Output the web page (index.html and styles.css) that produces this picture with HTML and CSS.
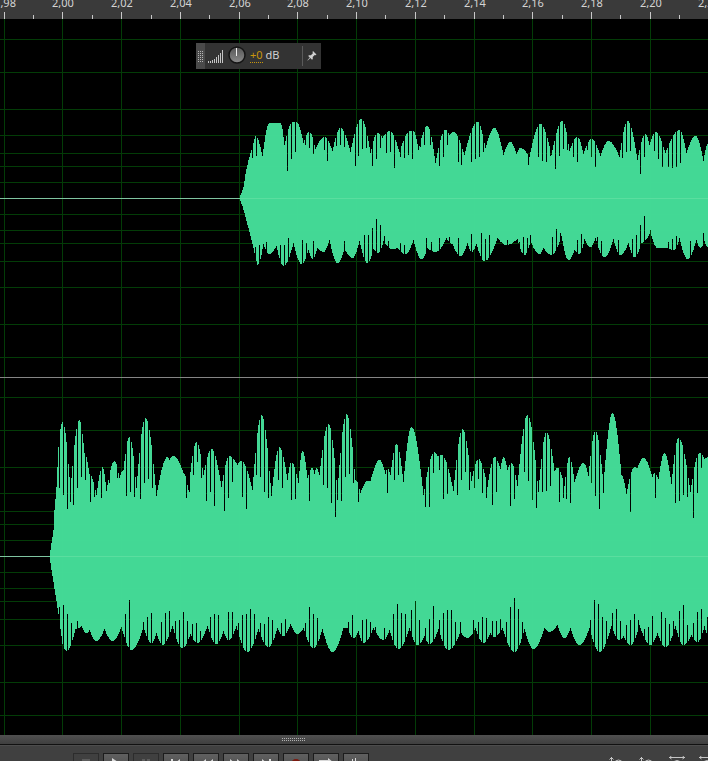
FILE: index.html
```html
<!DOCTYPE html>
<html lang="en">
<head>
    <meta charset="UTF-8">
    <title>Waveform editor</title>
    <link rel="stylesheet" href="styles.css">
</head>
<body>
    <div class="editor">
        <svg class="ruler" id="ruler"></svg>
        <div class="tracks">
            <svg class="waves" id="waves"></svg>
            <div class="hud">
                <span class="hud-grip">
                    <svg width="9" height="26"><path d="M2.5 8v12M4.5 8v12M6.5 8v12" stroke="#b5b5b5" stroke-dasharray="1 1"/></svg>
                </span>
                <svg class="hud-level" width="16" height="16"><path d="M.5 13v2M2.5 13v2M4.5 12v3M6.5 11v4M8.5 9v6M10.5 7v8M12.5 5v10M14.5 2v13" stroke="#c4c4c4"/></svg>
                <svg class="hud-knob" width="18" height="18">
                    <defs>
                        <linearGradient id="knob" x1="0" y1="0" x2="0" y2="1">
                            <stop offset="0" stop-color="#555"/>
                            <stop offset="1" stop-color="#8c8c8c"/>
                        </linearGradient>
                    </defs>
                    <circle cx="9" cy="9" r="8" fill="url(#knob)" stroke="#151515" stroke-width="1.5"/>
                    <path d="M8.5 2v8" stroke="#f0f0f0"/>
                </svg>
                <span class="hud-gain"><a href="#" class="hud-value">+0</a> dB</span>
                <button class="hud-pin" aria-label="Pin">
                    <svg width="10" height="12"><path d="M6 1l3.500 3.500-1 .8-.8-.2-2 2 .1 2-.8.7-1.700-1.700L.8 10.600l-.4-.4 2.400-2.600L1.200 6l.7-.8 2 .1 2-2-.4-1.200z" fill="#d0d0d0"/></svg>
                </button>
            </div>
        </div>
        <div class="splitter">
            <svg width="24" height="6"><path d="M0 1.500h24M0 3.500h24" stroke="#b0b0b0" stroke-dasharray="1 1"/></svg>
        </div>
        <div class="toolbar">
            <div class="transport">
                <button class="btn" disabled aria-label="Stop"><svg width="18" height="12"><path d="M5 1h8v9H5z"/></svg></button>
                <button class="btn" aria-label="Play"><svg width="18" height="12"><path d="M5 0l9 6-9 6z"/></svg></button>
                <button class="btn" disabled aria-label="Pause"><svg width="18" height="12"><path d="M5 1h3v10H5zM10 1h3v10h-3z"/></svg></button>
                <button class="btn" aria-label="To start"><svg width="18" height="12"><path d="M4 1h2v10H4zM13 1v10L7 6z"/></svg></button>
                <button class="btn" aria-label="Rewind"><svg width="18" height="12"><path d="M9 1v10L3 6zM16 1v10l-6-5z"/></svg></button>
                <button class="btn" aria-label="Fast forward"><svg width="18" height="12"><path d="M3 1v10l6-5zM10 1v10l6-5z"/></svg></button>
                <button class="btn" aria-label="To end"><svg width="18" height="12"><path d="M5 1v10l6-5zM12 1h2v10h-2z"/></svg></button>
                <button class="btn btn-record" aria-label="Record"><svg width="18" height="12"><circle cx="9" cy="6" r="5"/></svg></button>
                <button class="btn" aria-label="Loop"><svg width="18" height="12"><path d="M2 2h9V0l5 4-5 4V6H4v3h10v2H2z"/></svg></button>
                <button class="btn" aria-label="Skip selection"><svg width="18" height="12"><path d="M5 1h1v10H5zM8 0h1v12H8zM11 3l4 4-4 4z"/></svg></button>
            </div>
            <div class="zoom">
                <button class="zoom-btn" aria-label="Zoom in amplitude"><svg width="20" height="18"><path d="M4.500 1v14M2.500 3.500l2-2 2 2M14.500 12.500l4 4"/><circle cx="11.500" cy="8" r="4"/></svg></button>
                <button class="zoom-btn" aria-label="Zoom out amplitude"><svg width="20" height="18"><path d="M4.500 1v14M2.500 3.500l2-2 2 2M14.500 12.500l4 4"/><circle cx="11.500" cy="8" r="4"/></svg></button>
                <button class="zoom-btn" aria-label="Zoom in time"><svg width="20" height="18"><path d="M2 1.500h16M4.500 0l-2 1.500 2 1.500M15.500 0l2 1.500-2 1.500M13.500 12.500l4 4"/><circle cx="10" cy="8.500" r="4"/></svg></button>
                <button class="zoom-btn" aria-label="Zoom out time"><svg width="20" height="18"><path d="M2 1.500h16M4.500 0l-2 1.500 2 1.500M15.500 0l2 1.500-2 1.500M13.500 12.500l4 4"/><circle cx="10" cy="8.500" r="4"/></svg></button>
            </div>
        </div>
    </div>
    <script src="script.js"></script>
</body>
</html>
```
FILE: styles.css
```css
body {
    margin: 0;
    height: 100vh;
    overflow: hidden;
    background-color: #3c3c3c;
    color: #d0d0d0;
    font-family: "Noto Sans", "Liberation Sans", sans-serif;
    font-size: 11px;
}
button {
    margin: 0;
    padding: 0;
    border: none;
    background: none;
    cursor: pointer;
}
.editor {
    display: flex;
    flex-direction: column;
    height: 100%;
}
.ruler {
    display: block;
    flex: none;
    width: 100%;
    height: 19px;
    background-color: #3a3a3a;
}
.ruler text {
    fill: #d4d4d4;
    font-size: 11px;
    text-anchor: middle;
}
.ruler path {
    stroke: #c8c8c8;
}
.tracks {
    position: relative;
    flex: 1;
    min-height: 0;
    overflow: hidden;
    background-color: #000000;
}
.waves {
    display: block;
    width: 100%;
    height: 100%;
}
.grid-line {
    stroke: #033c07;
}
.wave {
    fill: #44dc98;
    fill-opacity: 0.98;
}
.zero-line {
    stroke: #7fc4a0;
}
.zero-over {
    stroke: #5ade9f;
}
.separator {
    stroke: #858585;
}
.hud {
    position: absolute;
    top: 24px;
    left: 196px;
    display: flex;
    align-items: center;
    width: 125px;
    height: 26px;
    background-color: #333333;
}
.hud-grip {
    height: 26px;
    background-color: #4a4a4a;
}
.hud-level {
    margin-left: 3px;
}
.hud-knob {
    margin: 0 4px 2px 4px;
}
.hud-gain {
    padding-bottom: 2px;
    line-height: 14px;
    white-space: nowrap;
}
.hud-value {
    color: #c8960c;
    text-decoration: none;
    border-bottom: 1px dotted #c8960c;
}
.hud-pin {
    display: flex;
    align-items: center;
    height: 20px;
    margin-left: auto;
    padding: 0 4px;
    border-left: 1px solid #5a5a5a;
}
.splitter {
    display: flex;
    flex: none;
    justify-content: center;
    height: 9px;
    padding: 0 120px 0 0;
    background: linear-gradient(#505050, #3f3f3f);
    border-bottom: 1px solid #111111;
}
.splitter svg {
    margin-top: 2px;
}
.toolbar {
    display: flex;
    flex: none;
    height: 16px;
    box-sizing: border-box;
    padding: 7px 0 0 73px;
    overflow: hidden;
    background-color: #404040;
    border-top: 1px solid #4c4c4c;
}
.transport {
    display: flex;
    gap: 4px;
}
.btn {
    display: flex;
    align-items: center;
    justify-content: center;
    width: 26px;
    height: 22px;
    box-sizing: border-box;
    background: linear-gradient(#606060, #484848);
    border: 1px solid #1c1c1c;
    fill: #d8d8d8;
}
.btn:disabled {
    background: #404040;
    border-color: #2c2c2c;
    fill: #5c5c5c;
}
.btn-record {
    fill: #7c1a10;
}
.zoom {
    display: flex;
    gap: 4px;
    width: 104px;
    margin-left: auto;
    overflow: hidden;
}
.zoom-btn {
    flex: none;
    width: 26px;
    height: 26px;
    fill: none;
    stroke: #c4c4c4;
}
```
FILE: script.js
```javascript
const RULER_HEIGHT = 19;
const STEP = 58.73;      // px per 0.02 s
const START = 3.7;       // px of 1.98 s
const width = Math.max(window.innerWidth, 708);

const dbLines = [16, 32, 45, 63, 89, 126, 159];

// Envelopes are x,y pairs of peaks and valleys, cuts are x,y pairs of the thin gaps
const channels = [
    {
        zero: 198,
        top: [239,198, 243,187, 245,174, 248,160, 255,136, 262,156, 269,123, 280,123, 284,145, 292,122, 296,122, 303,143, 309,132, 315,149, 324,137, 332,151, 340,128, 350,152, 361,119, 370,153, 377,133, 382,138, 389,131, 399,152, 410,131, 413,131, 418,150, 427,126, 435,163, 445,130, 449,135, 453,132, 464,155, 477,122, 485,148, 494,128, 503,155, 510,142, 516,154, 520,148, 529,157, 540,124, 551,155, 562,121, 569,151, 577,137, 583,154, 591,139, 600,156, 608,141, 619,157, 627,121, 637,160, 645,134, 649,145, 655,132, 665,153, 679,130, 686,153, 695,136, 703,161, 708,143],
        topCuts: [252,158, 256,156, 287,171, 291,159, 295,152, 305,145, 309,148, 313,154, 324,150, 327,161, 336,146, 340,145, 344,147, 355,166, 358,156, 362,149, 366,148, 372,166, 376,159, 380,148, 386,153, 390,152, 394,168, 400,157, 404,158, 408,155, 412,159, 420,147, 424,145, 430,145, 439,166, 443,157, 447,145, 458,162, 461,165, 471,162, 475,159, 479,157, 483,152, 528,165, 538,157, 542,161, 546,162, 550,156, 555,169, 559,156, 563,149, 567,150, 573,157, 577,162, 587,150, 591,157, 595,167, 622,158, 626,152, 630,151, 640,174, 644,157, 654,151, 658,159, 662,167, 668,167, 672,168, 676,167, 680,163],
        bottom: [239,198, 242,205, 245,216, 250,235, 257,264, 263,243, 269,253, 276,245, 283,265, 293,242, 301,263, 308,249, 312,258, 317,247, 323,251, 329,239, 337,262, 344,248, 352,257, 359,240, 367,262, 373,248, 378,252, 383,240, 392,248, 397,247, 405,253, 413,239, 421,258, 427,247, 435,251, 446,237, 452,243, 460,255, 467,242, 471,251, 476,243, 484,260, 497,237, 506,244, 517,238, 524,254, 530,240, 539,253, 543,247, 551,254, 561,235, 568,259, 574,249, 579,253, 584,238, 590,246, 595,237, 604,256, 613,238, 620,254, 628,242, 634,256, 641,242, 650,231, 657,247, 667,247, 674,249, 679,237, 687,258, 696,239, 700,247, 704,240, 708,247],
        bottomCuts: [255,246, 259,244, 266,241, 280,244, 284,244, 288,237, 302,239, 306,242, 313,240, 344,240, 364,234, 368,234, 372,227, 376,218, 380,224, 384,235, 388,240, 400,242, 404,244, 426,237, 431,241, 439,237, 449,236, 458,237, 471,233, 481,232, 485,238, 489,234, 507,239, 519,241, 523,236, 527,237, 530,234, 552,236, 556,228, 560,232, 577,239, 581,233, 597,236, 601,240, 618,239, 632,238, 636,234, 640,224, 644,215, 650,229, 668,241, 672,238, 676,235, 690,240, 703,232]
    },
    {
        zero: 556,
        top: [49,556, 53,530, 54,510, 56,487, 58,447, 62,422, 70,490, 79,420, 84,453, 89,474, 96,495, 102,467, 106,491, 114,461, 119,478, 123,470, 129,437, 136,488, 145,418, 156,496, 167,457, 169,460, 173,456, 183,473, 188,490, 196,442, 203,475, 211,449, 221,487, 229,456, 237,465, 241,461, 252,490, 261,415, 271,496, 279,447, 287,480, 291,462, 298,483, 302,451, 307,478, 312,468, 314,474, 316,468, 319,475, 328,424, 337,492, 346,414, 355,480, 360,493, 367,481, 370,481, 379,460, 385,474, 387,468, 390,475, 396,444, 403,482, 411,427, 423,495, 434,452, 437,456, 441,455, 453,491, 462,429, 471,481, 478,459, 487,487, 494,457, 500,469, 503,457, 507,470, 511,463, 517,486, 527,415, 538,492, 546,432, 554,471, 557,468, 564,486, 569,457, 574,482, 583,463, 588,476, 595,431, 603,485, 612,413, 621,475, 626,494, 634,467, 637,468, 643,458, 652,477, 654,473, 658,479, 664,453, 671,484, 678,438, 690,492, 699,453, 704,459, 708,457],
        topCuts: [59,488, 63,495, 67,509, 70,502, 73,505, 77,488, 81,477, 85,480, 90,502, 94,497, 101,498, 109,483, 117,478, 126,496, 130,492, 134,497, 140,499, 144,483, 148,479, 152,488, 186,498, 189,492, 193,475, 197,462, 201,478, 206,501, 210,492, 214,506, 224,511, 228,498, 232,482, 242,497, 246,509, 256,475, 260,477, 264,492, 268,498, 278,480, 282,488, 291,500, 295,499, 309,501, 323,485, 327,488, 331,503, 335,517, 337,500, 341,501, 345,477, 349,474, 353,483, 358,502, 387,493, 394,480, 398,475, 425,507, 429,507, 433,473, 439,470, 443,499, 447,494, 457,495, 461,480, 465,472, 469,490, 474,488, 478,479, 482,493, 486,498, 492,505, 496,492, 510,506, 514,499, 524,472, 528,481, 532,500, 536,508, 542,492, 546,491, 550,486, 559,502, 563,498, 566,499, 570,503, 591,483, 595,496, 599,509, 603,493, 630,512, 655,498, 675,503, 679,501, 683,495, 687,497, 693,518, 697,493, 701,468],
        bottom: [49,556, 52,575, 56,600, 59,620, 62,643, 66,650, 75,628, 81,625, 86,632, 89,629, 96,640, 104,628, 112,640, 121,626, 131,649, 143,626, 151,642, 156,632, 162,644, 172,625, 182,647, 190,633, 197,642, 207,625, 216,643, 223,630, 228,639, 236,625, 247,651, 258,628, 268,646, 277,627, 283,635, 290,623, 297,633, 303,627, 313,647, 322,628, 332,651, 343,627, 347,627, 353,637, 358,630, 363,642, 373,627, 383,639, 389,629, 398,648, 409,627, 417,644, 424,635, 429,643, 438,628, 448,649, 460,631, 467,637, 475,627, 483,642, 490,632, 494,636, 502,627, 514,651, 524,628, 533,648, 544,627, 549,631, 557,624, 564,637, 570,627, 579,644, 589,627, 599,651, 611,625, 619,639, 623,635, 630,644, 639,624, 650,644, 657,632, 665,646, 675,625, 683,644, 691,634, 697,641, 704,625, 708,635],
        bottomCuts: [59,606, 63,604, 67,613, 71,622, 77,620, 125,613, 129,599, 143,621, 147,616, 151,612, 161,621, 165,612, 169,610, 175,620, 179,619, 183,611, 187,620, 192,623, 196,622, 200,630, 210,616, 214,613, 218,614, 228,611, 232,611, 238,622, 242,614, 246,613, 250,608, 254,613, 260,622, 264,623, 268,616, 272,619, 281,622, 285,618, 305,622, 309,606, 313,613, 317,617, 348,621, 352,614, 362,619, 366,618, 370,621, 375,626, 384,627, 393,613, 397,603, 401,612, 405,613, 411,609, 415,600, 419,619, 425,627, 429,618, 433,605, 439,619, 443,612, 447,609, 451,609, 455,621, 460,621, 473,619, 478,621, 482,616, 486,617, 492,620, 496,620, 500,618, 506,621, 510,606, 514,597, 518,608, 522,621, 590,619, 594,599, 598,603, 602,616, 606,620, 612,612, 616,608, 620,620, 626,624, 630,619, 634,613, 638,619, 644,628, 648,626, 652,615, 661,611, 665,617, 669,623, 673,620, 679,610, 683,604, 687,624, 693,622, 697,611, 701,608, 707,616]
    }
];

function line(cls, x1, y1, x2, y2) {
    return `<path class="${cls}" d="M${x1} ${y1}L${x2} ${y2}"/>`;
}

// One y value per pixel column: steep next to a valley, flat next to a peak
function columns(points, cuts, zero) {
    const ys = [];
    for (let i = 0; i + 3 < points.length; i += 2) {
        const [x1, y1, x2, y2] = points.slice(i, i + 4);
        const rising = Math.abs(y2 - zero) > Math.abs(y1 - zero);
        for (let x = x1; x < x2; x++) {
            const t = (x - x1) / (x2 - x1);
            let k = rising ? Math.sin(t * Math.PI / 2) : 1 - Math.cos(t * Math.PI / 2);
            // the attack is a straight ramp
            if (i < 8) {
                k = t;
            }
            ys[x] = Math.round(y1 + (y2 - y1) * k);
        }
    }
    for (let i = 0; i < cuts.length; i += 2) {
        ys[cuts[i]] = cuts[i + 1];
    }
    return ys;
}

function drawRuler() {
    let out = '';
    for (let n = 0; START + n * STEP < width + 30; n++) {
        const x = Math.round(START + n * STEP);
        const half = Math.round(START + (n + 0.5) * STEP);
        const label = (1.98 + n * 0.02).toFixed(2).replace('.', ',');
        out += `<text x="${x + 1}" y="7">${label}</text>`;
        out += line('tick', x + 0.5, 12, x + 0.5, 19);
        out += line('tick', half + 0.5, 15, half + 0.5, 19);
    }
    document.getElementById('ruler').innerHTML = out;
}

function drawWaves() {
    let out = '';
    for (let n = 0; START + n * STEP < width; n++) {
        const x = Math.round(START + n * STEP) + 0.5;
        out += line('grid-line', x, 0, x, 800);
    }
    channels.forEach(channel => {
        const zero = channel.zero - RULER_HEIGHT + 0.5;
        dbLines.forEach(db => {
            out += line('grid-line', 0, zero - db, width, zero - db);
            out += line('grid-line', 0, zero + db, width, zero + db);
        });
        out += line('zero-line', 0, zero, channel.top[0], zero);
        const top = columns(channel.top, channel.topCuts, channel.zero);
        const bottom = columns(channel.bottom, channel.bottomCuts, channel.zero);
        let d = '';
        for (let x = channel.top[0]; x < top.length; x++) {
            d += `M${x} ${top[x] - RULER_HEIGHT}h1V${bottom[x] + 1 - RULER_HEIGHT}h-1z`;
        }
        out += `<path class="wave" shape-rendering="crispEdges" d="${d}"/>`;
        out += line('zero-over', channel.top[0], zero, top.length, zero);
    });
    out += line('separator', 0, 358.5, width, 358.5);
    document.getElementById('waves').innerHTML = out;
}

drawRuler();
drawWaves();
```
